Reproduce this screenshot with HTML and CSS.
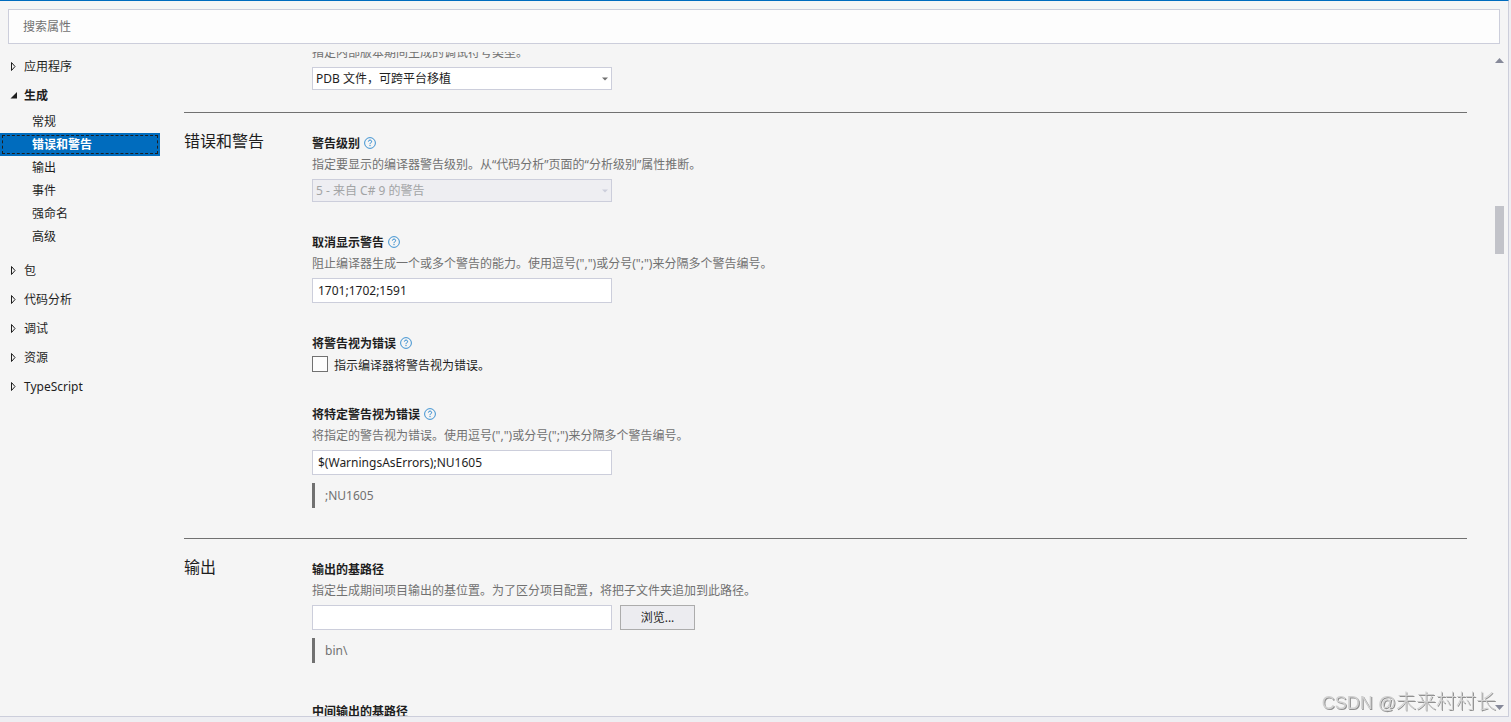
FILE: index.html
```
<!DOCTYPE html>
<html lang="zh-CN">
<head>
  <meta charset="UTF-8">
  <title>项目属性</title>
  <link rel="stylesheet" href="styles.css">
</head>
<body>

  <!-- Iconos compartidos -->
  <svg class="sprite" aria-hidden="true">
    <symbol id="closed" viewBox="0 0 7 11">
      <path d="M1.5 1.5 L5 5.5 L1.5 9.5 Z" fill="none" stroke="#1e1e1e" stroke-width="1"/>
    </symbol>
    <symbol id="opened" viewBox="0 0 7 11">
      <path d="M7 2 V8.5 H0.5 Z" fill="#1e1e1e"/>
    </symbol>
    <symbol id="help" viewBox="0 0 12 12">
      <circle cx="6" cy="6" r="5.4" fill="none" stroke="#1078c8" stroke-width="0.8"/>
      <path d="M4.4 4.6 C4.4 2.6 7.6 2.6 7.6 4.5 C7.6 5.7 6 5.8 6 7.2" fill="none" stroke="#1078c8" stroke-width="0.9"/>
      <rect x="5.5" y="8.1" width="1" height="1" fill="#1078c8"/>
    </symbol>
    <symbol id="down" viewBox="0 0 6 4">
      <path d="M0 0.5 H6 L3 3.5 Z" fill="currentColor"/>
    </symbol>
  </svg>

  <div class="panel">
    <input class="search" type="text" placeholder="搜索属性" aria-label="搜索属性">

    <div class="main">
      <nav class="sidebar">
        <a class="group" href="#"><svg class="twisty"><use href="#closed"/></svg>应用程序</a>
        <a class="group open" href="#"><svg class="twisty"><use href="#opened"/></svg>生成</a>
        <div class="children">
          <a href="#">常规</a>
          <a class="selected" href="#">错误和警告</a>
          <a href="#">输出</a>
          <a href="#">事件</a>
          <a href="#">强命名</a>
          <a href="#">高级</a>
        </div>
        <a class="group" href="#"><svg class="twisty"><use href="#closed"/></svg>包</a>
        <a class="group" href="#"><svg class="twisty"><use href="#closed"/></svg>代码分析</a>
        <a class="group" href="#"><svg class="twisty"><use href="#closed"/></svg>调试</a>
        <a class="group" href="#"><svg class="twisty"><use href="#closed"/></svg>资源</a>
        <a class="group" href="#"><svg class="twisty"><use href="#closed"/></svg>TypeScript</a>
      </nav>

      <div class="content">
        <section class="section scrolled">
          <div class="props">
            <div class="prop">
              <label class="desc" for="symbols">指定内部版本期间生成的调试符号类型。</label>
              <div class="combo">
                <select id="symbols"><option>PDB 文件，可跨平台移植</option></select>
                <svg class="arrow"><use href="#down"/></svg>
              </div>
            </div>
          </div>
        </section>

        <section class="section">
          <h2>错误和警告</h2>
          <div class="props">
            <div class="prop">
              <div class="title"><label for="level">警告级别</label><a class="help" href="#" aria-label="帮助"><svg><use href="#help"/></svg></a></div>
              <p class="desc">指定要显示的编译器警告级别。从“代码分析”页面的“分析级别”属性推断。</p>
              <div class="combo disabled">
                <select id="level" disabled><option>5 - 来自 C# 9 的警告</option></select>
                <svg class="arrow"><use href="#down"/></svg>
              </div>
            </div>

            <div class="prop">
              <div class="title"><label for="nowarn">取消显示警告</label><a class="help" href="#" aria-label="帮助"><svg><use href="#help"/></svg></a></div>
              <p class="desc">阻止编译器生成一个或多个警告的能力。使用逗号(",")或分号(";")来分隔多个警告编号。</p>
              <input class="text" id="nowarn" type="text" value="1701;1702;1591">
            </div>

            <div class="prop">
              <div class="title"><span>将警告视为错误</span><a class="help" href="#" aria-label="帮助"><svg><use href="#help"/></svg></a></div>
              <label class="check"><input type="checkbox">指示编译器将警告视为错误。</label>
            </div>

            <div class="prop">
              <div class="title"><label for="aserrors">将特定警告视为错误</label><a class="help" href="#" aria-label="帮助"><svg><use href="#help"/></svg></a></div>
              <p class="desc">将指定的警告视为错误。使用逗号(",")或分号(";")来分隔多个警告编号。</p>
              <input class="text" id="aserrors" type="text" value="$(WarningsAsErrors);NU1605">
              <div class="preview">;NU1605</div>
            </div>
          </div>
        </section>

        <section class="section">
          <h2>输出</h2>
          <div class="props">
            <div class="prop">
              <div class="title"><label for="outpath">输出的基路径</label></div>
              <p class="desc">指定生成期间项目输出的基位置。为了区分项目配置，将把子文件夹追加到此路径。</p>
              <div class="browse">
                <input class="text" id="outpath" type="text">
                <button type="button">浏览...</button>
              </div>
              <div class="preview">bin\</div>
            </div>

            <div class="prop">
              <div class="title"><span>中间输出的基路径</span></div>
            </div>
          </div>
        </section>
      </div>

      <div class="scrollbar">
        <svg class="scroll-arrow" viewBox="0 0 9 5"><path d="M0 5 L4.5 0 L9 5 Z" fill="#868999"/></svg>
        <div class="track"><div class="thumb"></div></div>
        <svg class="scroll-arrow" viewBox="0 0 9 5"><path d="M0 0 H9 L4.5 5 Z" fill="#868999"/></svg>
      </div>
    </div>
  </div>

  <div class="watermark"><span>CSDN @</span>未来村村长</div>

</body>
</html>
```
FILE: styles.css
```
* {
  box-sizing: border-box;
}

body {
  margin: 0;
  height: 100vh;
  padding: 0 2px 5px 0;
  display: flex;
  background-color: #eeeef2;
  font-family: "Noto Sans", "Noto Sans CJK SC", sans-serif;
  font-size: 12px;
  line-height: 17px;
  color: #1e1e1e;
  overflow: hidden;
}

a {
  color: inherit;
  text-decoration: none;
}

input, select, button {
  font: inherit;
  color: inherit;
  border-radius: 0;
}

.sprite {
  position: absolute;
  width: 0;
  height: 0;
}

.panel {
  flex: 1;
  min-width: 0;
  display: flex;
  flex-direction: column;
  background-color: #f5f5f5;
  border-top: 1px solid #006cbe;
  border-right: 1px solid #cccedb;
  border-bottom: 1px solid #cccedb;
}

.search {
  flex: none;
  height: 35px;
  margin: 8px;
  padding: 0 14px;
  background-color: #fdfdfd;
  border: 1px solid #cccedb;
}

.search::placeholder {
  color: #717171;
}

.main {
  flex: 1;
  min-height: 0;
  display: flex;
}

/* Menú lateral */
.sidebar {
  flex: none;
  width: 160px;
  margin-right: 24px;
}

.group {
  display: flex;
  align-items: center;
  gap: 7px;
  height: 29px;
  padding-left: 10px;
}

.twisty {
  width: 7px;
  height: 11px;
}

.open, .selected, .title {
  font-weight: bold;
}

.children {
  padding-bottom: 8px;
}

.children a {
  display: block;
  line-height: 23px;
  padding-left: 32px;
}

.children .selected {
  background-color: #006cbe;
  color: white;
  outline: 1px dashed #1e1e1e;
  outline-offset: -3px;
}

/* Propiedades */
.content {
  flex: 1;
  min-width: 0;
  margin-right: 28px;
  overflow: hidden;
}

.section {
  display: grid;
  grid-template-columns: 128px 1fr;
  padding: 21px 0 22px;
  border-top: 1px solid #717171;
}

.scrolled {
  margin-top: -8px;
  padding-top: 0;
  border-top: none;
}

.props {
  grid-column: 2;
}

h2 {
  margin: 0;
  font-size: 16px;
  font-weight: normal;
  line-height: 14px;
}

.prop {
  display: flow-root;
  margin-bottom: 31px;
}

.prop:last-child {
  margin-bottom: 0;
}

.title {
  display: flex;
  align-items: center;
  gap: 4px;
  height: 18px;
  margin-bottom: 4px;
}

.help, .help svg {
  display: block;
  width: 12px;
  height: 12px;
}

.desc {
  display: block;
  margin: 0 0 6px;
  color: #717171;
}

.combo {
  position: relative;
  width: 300px;
  height: 23px;
  color: #1e1e1e;
}

.combo select {
  appearance: none;
  display: block;
  width: 100%;
  height: 100%;
  padding: 0 16px 0 3px;
  background-color: white;
  border: 1px solid #cccedb;
}

.combo.disabled select {
  background-color: #eeeef2;
  color: #a2a4a5;
  opacity: 1;
}

.arrow {
  position: absolute;
  right: 4px;
  top: 10px;
  width: 6px;
  height: 4px;
  color: #717171;
  pointer-events: none;
}

.disabled .arrow {
  color: #cccedb;
}

.text {
  display: block;
  width: 300px;
  height: 25px;
  padding: 0 5px;
  background-color: white;
  border: 1px solid #cccedb;
}

.check {
  display: flex;
  align-items: center;
  gap: 6px;
  height: 18px;
}

.check input {
  appearance: none;
  width: 16px;
  height: 16px;
  margin: 0 0 2px;
  background-color: #fdfdfd;
  border: 1px solid #717171;
}

.preview {
  height: 25px;
  margin: 8px 0;
  padding-left: 10px;
  border-left: 3px solid #717171;
  line-height: 25px;
  color: #717171;
}

.browse {
  display: flex;
  gap: 8px;
}

.browse button {
  width: 75px;
  padding: 0;
  background-color: #ececf0;
  border: 1px solid #acacac;
}

/* Barra de desplazamiento */
.scrollbar {
  flex: none;
  width: 9px;
  margin-right: 4px;
  padding: 6px 0;
  display: flex;
  flex-direction: column;
}

.scroll-arrow {
  display: block;
  width: 9px;
  height: 5px;
}

.track {
  flex: 1;
  display: flex;
  flex-direction: column;
}

.track::before {
  content: "";
  flex: 24;
}

.track::after {
  content: "";
  flex: 76;
}

.thumb {
  height: 48px;
  background-color: #c2c3c9;
}

.watermark {
  position: fixed;
  right: 15px;
  bottom: 5px;
  font-family: "Liberation Sans", "Noto Sans CJK SC", sans-serif;
  font-size: 20px;
  font-weight: 300;
  line-height: 28px;
  color: #d0d0d0;
  text-shadow: 1px 1px 0 #909090;
  pointer-events: none;
}

.watermark span {
  font-size: 18px;
}
```
